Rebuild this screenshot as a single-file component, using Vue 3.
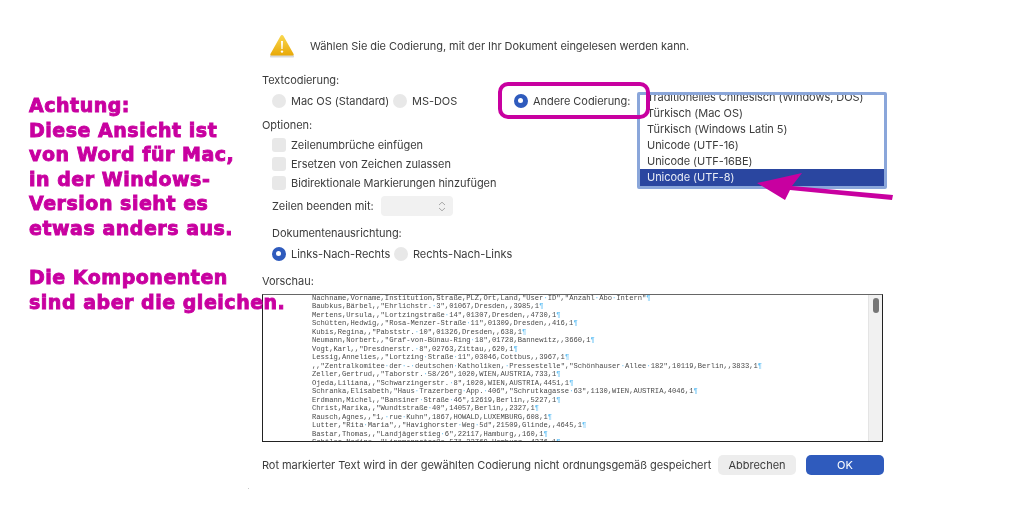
<script setup>
const note = ['Achtung:', 'Diese Ansicht ist', 'von Word für Mac,', 'in der Windows-', 'Version sieht es', 'etwas anders aus.']
const note2 = ['Die Komponenten', 'sind aber die gleichen.']
const encodings = [
  { label: 'Traditionelles Chinesisch (Windows, DOS)' },
  { label: 'Türkisch (Mac OS)' },
  { label: 'Türkisch (Windows Latin 5)' },
  { label: 'Unicode (UTF-16)' },
  { label: 'Unicode (UTF-16BE)' },
  { label: 'Unicode (UTF-8)', selected: true }
]
const raw = [
  'Nachname,Vorname,Institution,Straße,PLZ,Ort,Land,"User·ID","Anzahl·Abo·Intern"¶',
  'Baubkus,Bärbel,,"Ehrlichstr.·3",01067,Dresden,,3985,1¶',
  'Mertens,Ursula,,"Lortzingstraße·14",01307,Dresden,,4730,1¶',
  'Schütten,Hedwig,,"Rosa-Menzer-Straße·11",01309,Dresden,,416,1¶',
  'Kubis,Regina,,"Pabststr.·10",01326,Dresden,,638,1¶',
  'Neumann,Norbert,,"Graf-von-Bünau-Ring·18",01728,Bannewitz,,3660,1¶',
  'Vogt,Karl,,"Dresdnerstr.·8",02763,Zittau,,620,1¶',
  'Lessig,Annelies,,"Lortzing·Straße·11",03046,Cottbus,,3967,1¶',
  ',,"Zentralkomitee·der·-·deutschen·Katholiken,·Pressestelle","Schönhauser·Allee·182",10119,Berlin,,3833,1¶',
  'Zeller,Gertrud,,"Taborstr.·58/26",1020,WIEN,AUSTRIA,733,1¶',
  'Ojeda,Liliana,,"Schwarzingerstr.·8",1020,WIEN,AUSTRIA,4451,1¶',
  'Schranka,Elisabeth,"Haus·Trazerberg·App.·406","Schrutkagasse·63",1130,WIEN,AUSTRIA,4046,1¶',
  'Erdmann,Michel,,"Bansiner·Straße·46",12619,Berlin,,5227,1¶',
  'Christ,Marika,,"Wundtstraße·40",14057,Berlin,,2327,1¶',
  'Rausch,Agnes,,"1,·rue·Kuhn",1867,HOWALD,LUXEMBURG,608,1¶',
  'Lutter,"Rita·Maria",,"Havighorster·Weg·5d",21509,Glinde,,4645,1¶',
  'Bastar,Thomas,,"Landjägerstieg·6",22117,Hamburg,,160,1¶',
  'Schöler,Nadine,,"Lippmannstraße·57",22769,Hamburg,,4376,1¶'
]
const lines = raw.map(l => l.split(/([·¶])/).filter(Boolean))
</script>

<template>
  <div class="page">
    <aside class="note">
      <div v-for="t in note" :key="t">{{ t }}</div>
      <div class="note-gap"></div>
      <div v-for="t in note2" :key="t">{{ t }}</div>
    </aside>

    <main class="dialog">
      <header class="head">
        <svg class="warn" width="28" height="26" viewBox="0 0 28 26">
          <defs>
            <linearGradient id="wg" x1="0" y1="0" x2="0" y2="1">
              <stop offset="0" stop-color="#f9d850" />
              <stop offset="1" stop-color="#e8a806" />
            </linearGradient>
          </defs>
          <path d="M14 2.5 L26 23 Q26.5 24.5 25 24.5 L3 24.5 Q1.5 24.5 2 23 Z" fill="#d9d9d9" />
          <path d="M14 2 Q15 2 15.5 3 L25.6 21 Q26.2 22.6 24.6 22.6 L3.4 22.6 Q1.8 22.6 2.4 21 L12.5 3 Q13 2 14 2 Z" fill="url(#wg)" />
          <path d="M13 8 H15 L14.6 16 H13.4 Z" fill="#fff" />
          <circle cx="14" cy="18.6" r="1.2" fill="#fff" />
        </svg>
        <span>Wählen Sie die Codierung, mit der Ihr Dokument eingelesen werden kann.</span>
      </header>

      <div class="label l-text">Textcodierung:</div>
      <div class="enc-row">
        <span class="radio"></span><span class="opt o1">Mac OS (Standard)</span>
        <span class="radio"></span><span class="opt o2">MS-DOS</span>
        <span class="radio on"></span><span class="opt">Andere Codierung:</span>
        <ul class="listbox">
          <li v-for="e in encodings" :key="e.label" :class="{ sel: e.selected }">{{ e.label }}</li>
        </ul>
        <div class="ring"></div>
      </div>

      <div class="label l-opt">Optionen:</div>
      <div class="checks">
        <div class="check"><span class="box"></span>Zeilenumbrüche einfügen</div>
        <div class="check"><span class="box"></span>Ersetzen von Zeichen zulassen</div>
        <div class="check"><span class="box"></span>Bidirektionale Markierungen hinzufügen</div>
      </div>
      <div class="ends">
        <span>Zeilen beenden mit:</span>
        <span class="select">
          <svg width="8" height="11" viewBox="0 0 8 11" fill="none" stroke="#a8a8a8" stroke-width="1">
            <path d="M1 4 L4 1.2 L7 4" /><path d="M1 7 L4 9.8 L7 7" />
          </svg>
        </span>
      </div>
      <div class="dir-label">Dokumentenausrichtung:</div>
      <div class="dir-row">
        <span class="radio on"></span><span class="opt o3">Links-Nach-Rechts</span>
        <span class="radio"></span><span class="opt">Rechts-Nach-Links</span>
      </div>

      <div class="label l-prev">Vorschau:</div>
      <section class="preview">
        <div class="code">
          <div v-for="(l, i) in lines" :key="i" class="line"><template v-for="(p, j) in l" :key="j"><span v-if="p === '·' || p === '¶'" class="mark">{{ p }}</span><template v-else>{{ p }}</template></template></div>
        </div>
        <div class="track"><div class="thumb"></div></div>
      </section>

      <footer class="foot">
        <span class="foot-text">Rot markierter Text wird in der gewählten Codierung nicht ordnungsgemäß gespeichert</span>
        <button class="btn">Abbrechen</button>
        <button class="btn primary">OK</button>
      </footer>
    </main>

    <svg class="arrow" width="150" height="40" viewBox="0 0 150 40">
      <path d="M2 12 L47 2 L37 15 L138 24 L137 29 L35 19 L30 29 Z" fill="#c800a0" />
    </svg>
    <span class="speck"></span>
  </div>
</template>

<style>
html, body { margin: 0; background: #fff; }
</style>

<style scoped>
.page {
  position: relative;
  width: 1024px;
  height: 512px;
  overflow: hidden;
  display: flex;
  background: #fff;
  font-family: Inter, "Liberation Sans", sans-serif;
  color: #3c3c3c;
}
.note {
  width: 233px;
  margin-left: 29px;
  padding-top: 93px;
  flex: none;
  white-space: nowrap;
  font-family: "DejaVu Sans", sans-serif;
  font-weight: 700;
  font-size: 19px;
  letter-spacing: 0.52px;
  line-height: 24.6px;
  color: #c800a0;
  -webkit-text-stroke: 0.9px #c800a0;
  position: relative;
  z-index: 2;
  filter: blur(0.3px);
}
.note-gap { height: 24.6px; }
.dialog {
  width: 622px;
  flex: none;
  display: flex;
  flex-direction: column;
  font-size: 11px;
  line-height: 14px;
  letter-spacing: -0.05px;
  filter: blur(0.45px);
}
.head {
  display: flex;
  align-items: center;
  height: 26px;
  margin-top: 33px;
  padding-left: 6px;
}
.warn { margin-right: 14px; }
.label { height: 14px; }
.l-text { margin-top: 14px; }
.enc-row {
  position: relative;
  display: flex;
  align-items: center;
  height: 16px;
  margin-top: 6px;
  padding-left: 10px;
}
.radio {
  width: 14px;
  height: 14px;
  flex: none;
  border-radius: 50%;
  background: #e8e8e8;
  margin-right: 5px;
  box-sizing: border-box;
}
.radio.on {
  background: #2f5bbd;
  border: 4.5px solid #2f5bbd;
  position: relative;
}
.radio.on::after {
  content: "";
  display: block;
  width: 5px;
  height: 5px;
  border-radius: 50%;
  background: #fff;
}
.opt { white-space: nowrap; }
.o1 { width: 102px; }
.o2 { width: 102px; }
.o3 { width: 103px; }
.ring {
  position: absolute;
  left: 236px;
  top: -11px;
  width: 152px;
  height: 37px;
  box-sizing: border-box;
  border: 4.5px solid #c800a0;
  border-radius: 10px;
}
.listbox {
  position: absolute;
  left: 375px;
  top: -1px;
  width: 250px;
  height: 97px;
  box-sizing: border-box;
  margin: 0;
  padding: 0;
  list-style: none;
  border: 3px solid #8aa6da;
  border-radius: 2px;
  background: #fff;
  overflow: hidden;
  display: flex;
  flex-direction: column;
  justify-content: flex-end;
}
.listbox li {
  flex: none;
  height: 16px;
  line-height: 16px;
  padding-left: 7px;
  white-space: nowrap;
}
.listbox li.sel { height: 17px; line-height: 17px; background: #2a46a0; color: #e8ecf6; }
.l-opt { margin-top: 9px; }
.checks {
  display: flex;
  flex-direction: column;
  gap: 5px;
  margin-top: 6px;
  padding-left: 10px;
}
.check { display: flex; align-items: center; height: 14px; }
.box {
  width: 14px;
  height: 14px;
  margin-right: 5px;
  border-radius: 3px;
  background: #e8e8e8;
}
.ends {
  display: flex;
  align-items: center;
  height: 20px;
  margin-top: 6px;
  padding-left: 10px;
}
.select {
  width: 72px;
  height: 20px;
  margin-left: 7px;
  border-radius: 4px;
  background: #f1f1f1;
  display: flex;
  align-items: center;
  justify-content: flex-end;
  padding-right: 7px;
  box-sizing: border-box;
}
.dir-label { height: 14px; margin-top: 10px; padding-left: 10px; }
.dir-row {
  display: flex;
  align-items: center;
  height: 16px;
  margin-top: 6px;
  padding-left: 10px;
}
.l-prev { margin-top: 12px; }
.preview {
  display: flex;
  width: 621px;
  height: 148px;
  margin-top: 6px;
  box-sizing: border-box;
  border: 1px solid #222;
  border-top-color: #666;
  overflow: hidden;
}
.code {
  flex: 1;
  min-width: 0;
  margin-top: -1px;
  padding-left: 49px;
  font-family: "Liberation Mono", monospace;
  font-size: 7.15px;
  letter-spacing: 0;
  line-height: 8.47px;
  color: #4a4a4a;
  white-space: pre;
  overflow: hidden;
}
.mark { color: #69c3f5; }
.track {
  width: 14px;
  flex: none;
  background: #f1f1f1;
  border-left: 1px solid #e4e4e4;
  box-sizing: border-box;
  padding: 3px 3px 0 4px;
}
.thumb { height: 15px; border-radius: 4px; background: #767676; }
.foot {
  display: flex;
  align-items: center;
  height: 20px;
  margin-top: 13px;
}
.foot-text { width: 456px; flex: none; white-space: nowrap; }
.btn {
  width: 78px;
  height: 20px;
  padding: 0;
  margin-right: 10px;
  border: none;
  border-radius: 5px;
  background: #ededed;
  color: #3c3c3c;
  font: inherit;
}
.btn.primary { background: #2f5bbd; color: #fff; margin-right: 0; }
.arrow {
  position: absolute;
  left: 755px;
  top: 171px;
  z-index: 3;
}
.speck {
  position: absolute;
  left: 248px;
  top: 488px;
  width: 1px;
  height: 1px;
  background: #c8c8c8;
}
</style>
